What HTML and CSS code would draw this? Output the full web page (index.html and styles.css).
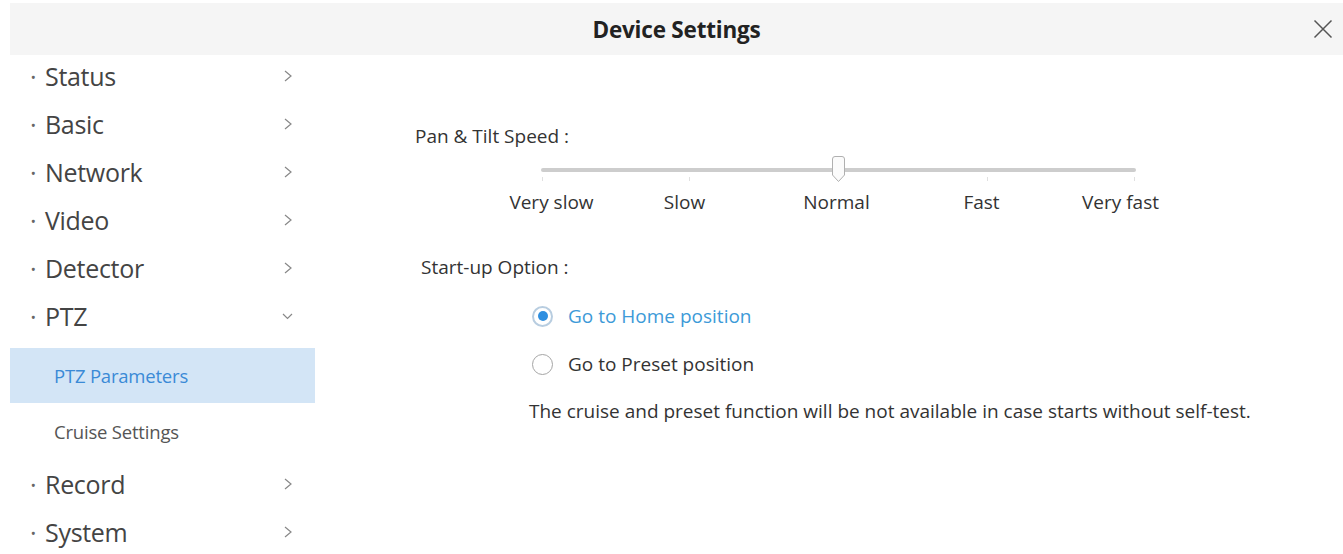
FILE: index.html
```html
<!DOCTYPE html>
<html>
<head>
<meta charset="utf-8">
<link rel="stylesheet" href="styles.css">
</head>
<body>
<div class="dialog">
  <div class="header">
    <span></span>
    <h1 class="title">Device Settings</h1>
    <button class="close" aria-label="Close">
      <svg width="20" height="20" viewBox="0 0 20 20"><path d="M1.5 1.5L18.5 18.5M18.5 1.5L1.5 18.5" stroke="#555" stroke-width="1.5" fill="none"/></svg>
    </button>
  </div>
  <div class="body">
    <nav class="sidebar">
      <div class="item"><span class="dot">·</span><span class="label">Status</span><span class="chev"><svg width="8" height="12" viewBox="0 0 8 12"><path d="M1 1L7 6L1 11" stroke="#888" stroke-width="1.2" fill="none"/></svg></span></div>
      <div class="item"><span class="dot">·</span><span class="label">Basic</span><span class="chev"><svg width="8" height="12" viewBox="0 0 8 12"><path d="M1 1L7 6L1 11" stroke="#888" stroke-width="1.2" fill="none"/></svg></span></div>
      <div class="item"><span class="dot">·</span><span class="label">Network</span><span class="chev"><svg width="8" height="12" viewBox="0 0 8 12"><path d="M1 1L7 6L1 11" stroke="#888" stroke-width="1.2" fill="none"/></svg></span></div>
      <div class="item"><span class="dot">·</span><span class="label">Video</span><span class="chev"><svg width="8" height="12" viewBox="0 0 8 12"><path d="M1 1L7 6L1 11" stroke="#888" stroke-width="1.2" fill="none"/></svg></span></div>
      <div class="item"><span class="dot">·</span><span class="label">Detector</span><span class="chev"><svg width="8" height="12" viewBox="0 0 8 12"><path d="M1 1L7 6L1 11" stroke="#888" stroke-width="1.2" fill="none"/></svg></span></div>
      <div class="item"><span class="dot">·</span><span class="label">PTZ</span><span class="chev down"><svg width="11" height="7" viewBox="0 0 11 7"><path d="M1 1L5.5 5.5L10 1" stroke="#888" stroke-width="1.2" fill="none"/></svg></span></div>
      <div class="sub active">PTZ Parameters</div>
      <div class="sub">Cruise Settings</div>
      <div class="item"><span class="dot">·</span><span class="label">Record</span><span class="chev"><svg width="8" height="12" viewBox="0 0 8 12"><path d="M1 1L7 6L1 11" stroke="#888" stroke-width="1.2" fill="none"/></svg></span></div>
      <div class="item"><span class="dot">·</span><span class="label">System</span><span class="chev"><svg width="8" height="12" viewBox="0 0 8 12"><path d="M1 1L7 6L1 11" stroke="#888" stroke-width="1.2" fill="none"/></svg></span></div>
    </nav>
    <main class="content">
      <div class="field-label speed-label">Pan &amp; Tilt Speed :</div>
      <div class="slider">
        <div class="track">
          <span class="tick t1"></span><span class="tick t2"></span><span class="tick t3"></span><span class="tick t4"></span><span class="tick t5"></span>
          <span class="thumb">
            <svg width="15" height="28" viewBox="0 0 15 28"><path d="M1.5 4Q1.5 1.5 4 1.5H11Q13.5 1.5 13.5 4V20L7.5 26.5L1.5 20Z" fill="#fbfbfb" stroke="#b0b0b0" stroke-width="1"/></svg>
          </span>
        </div>
      </div>
      <div class="ticks">
        <span class="tl l1">Very slow</span>
        <span class="tl l2">Slow</span>
        <span class="tl l3">Normal</span>
        <span class="tl l4">Fast</span>
        <span class="tl l5">Very fast</span>
      </div>
      <div class="field-label startup-label">Start-up Option :</div>
      <label class="radio checked"><span class="circle"></span><span>Go to Home position</span></label>
      <label class="radio second"><span class="circle"></span><span>Go to Preset position</span></label>
      <p class="note">The cruise and preset function will be not available in case starts without self-test.</p>
    </main>
  </div>
</div>
</body>
</html>
```
FILE: styles.css
```css
* { box-sizing: border-box; }
html, body { margin: 0; padding: 0; background: #fff; }
body {
  font-family: "Open Sans", "Noto Sans", "Liberation Sans", sans-serif;
  color: #333;
  width: 1343px;
  height: 554px;
  overflow: hidden;
}
.dialog { padding: 3px 0 0 10px; }
.header {
  height: 52px;
  background: #f5f5f5;
  display: grid;
  grid-template-columns: 1fr auto 1fr;
  align-items: center;
}
.title {
  margin: 0;
  font-size: 22.5px;
  font-weight: 700;
  color: #222;
  letter-spacing: -0.2px;
}
.close {
  justify-self: end;
  margin-right: 10px;
  border: 0;
  background: transparent;
  padding: 0;
  width: 20px;
  height: 20px;
  display: flex;
}
.body { display: flex; }
.sidebar { width: 305px; flex: none; display: flex; flex-direction: column; margin-top: -3px; }
.item {
  height: 48px;
  display: flex;
  align-items: center;
  padding: 0 22px 0 20px;
  font-size: 25px;
  color: #444;
}
.item .dot { width: 15px; flex: none; color: #666; }
.item .label { flex: 1; letter-spacing: -0.3px; }
.chev { display: flex; width: 11px; justify-content: center; }
.sub {
  height: 57px;
  display: flex;
  align-items: center;
  padding-left: 44px;
  font-size: 18.5px;
  color: #555;
  letter-spacing: -0.2px;
}
.sidebar .sub.active { background: #d3e5f6; color: #3a8ad6; margin-top: 8px; height: 55px; }
.content { flex: 1; display: flex; flex-direction: column; align-items: flex-start; }
.field-label { font-size: 19px; line-height: 26px; color: #333; }
.speed-label { margin: 68px 0 0 100px; }
.slider { margin: 7px 0 0 226px; width: 595px; height: 28px; display: flex; align-items: center; }
.track { position: relative; width: 595px; height: 4px; background: #cdcdcd; border-radius: 2px; }
.tick { position: absolute; top: 9px; width: 1px; height: 4px; background: #e0e0e0; }
.t1 { left: 1px; } .t2 { left: 148px; } .t3 { left: 297px; } .t4 { left: 446px; } .t5 { left: 593px; }
.thumb { position: absolute; left: 290px; top: -13px; line-height: 0; }
.ticks {
  margin: 5px 0 0 151px;
  display: grid;
  grid-template-columns: repeat(5, 149px);
  font-size: 19px;
  line-height: 26px;
  color: #333;
}
.tl { text-align: center; }
.l1 { padding-left: 22px; }
.l2 { padding-right: 10px; }
.l3 { padding-right: 4px; }
.l4 { padding-right: 12px; }
.l5 { padding-right: 32px; }
.startup-label { margin: 39px 0 0 106px; }
.radio {
  margin: 23px 0 0 217px;
  height: 26px;
  display: flex;
  align-items: center;
  gap: 15px;
  font-size: 19px;
  color: #333;
}
.radio.second { margin-top: 22px; }
.radio .circle {
  width: 21px;
  height: 21px;
  border: 1.5px solid #a5a5a5;
  border-radius: 50%;
  background: #fff;
  display: flex;
  align-items: center;
  justify-content: center;
}
.radio.checked { color: #3d9ad8; }
.radio.checked .circle { border: 2px solid #b8cde0; }
.radio.checked .circle::after {
  content: "";
  width: 10px;
  height: 10px;
  border-radius: 50%;
  background: #2f8fe0;
}
.note { margin: 21px 0 0 214px; font-size: 19px; line-height: 26px; color: #333; }
```
